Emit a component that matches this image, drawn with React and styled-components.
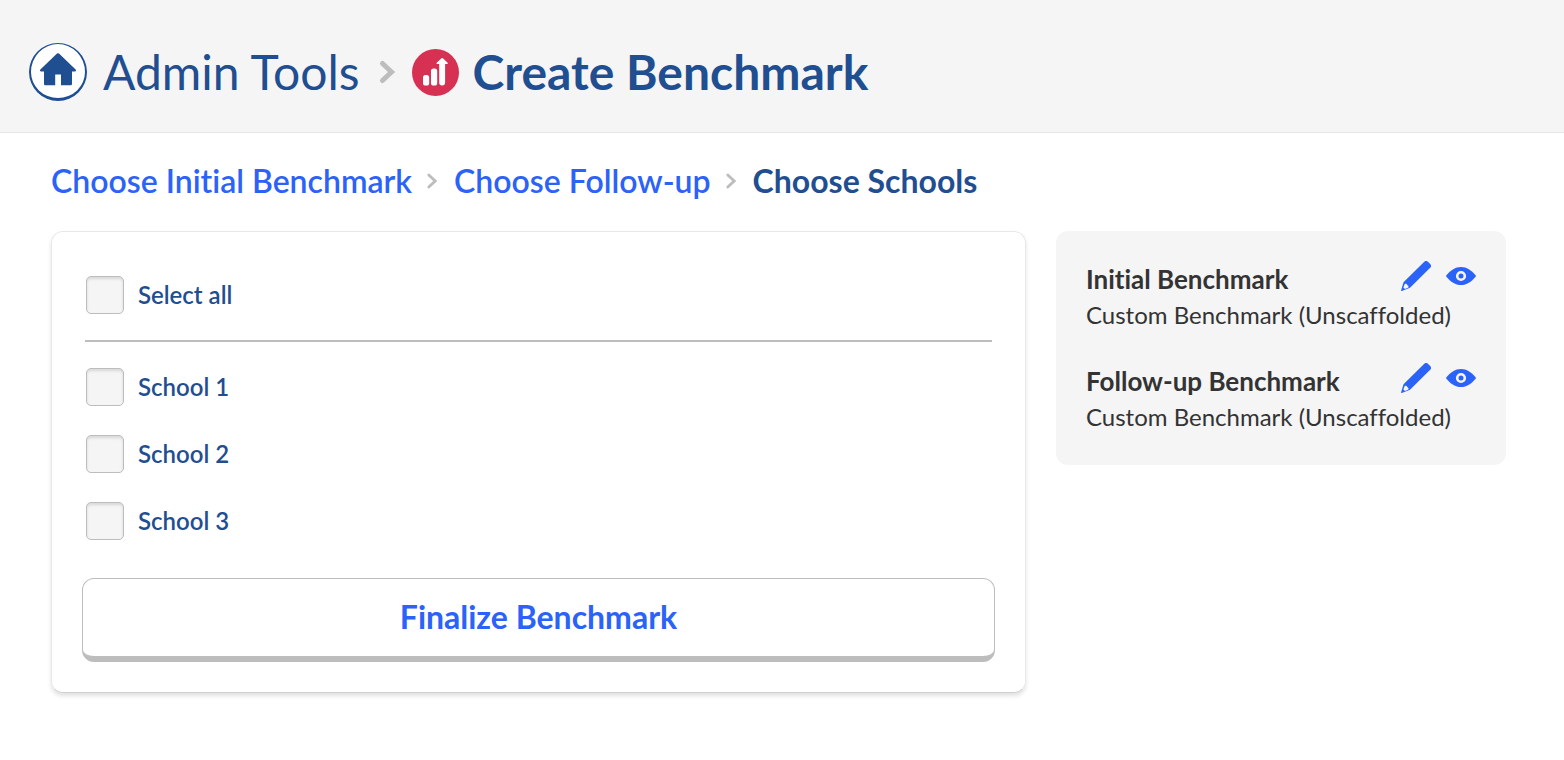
import { useState } from "react";
import styled, { createGlobalStyle } from "styled-components";

const schools = ["School 1", "School 2", "School 3"];

const benchmarks = [
  { title: "Initial Benchmark", name: "Custom Benchmark (Unscaffolded)" },
  { title: "Follow-up Benchmark", name: "Custom Benchmark (Unscaffolded)" },
];

const HomeIcon = () => (
  <svg width="36" height="33" viewBox="0 0 36 33" fill="currentColor">
    <path d="M17 .6a1.5 1.5 0 0 1 2 0L35.600 16.500c.8.800.4 2-.8 2H32v12.500a1.300 1.300 0 0 1-1.300 1.300H21V21.500H15.200V32.300H5.300A1.300 1.300 0 0 1 4 31V18.500H1.200c-1.200 0-1.600-1.200-.8-2z" />
  </svg>
);

const ChartIcon = () => (
  <svg width="47" height="47" viewBox="0 0 47 47">
    <circle cx="23.5" cy="23.5" r="23.5" fill="#d63152" />
    <g fill="#fff">
      <rect x="11" y="26" width="6.200" height="10.500" rx="2.600" />
      <rect x="19" y="19.500" width="6.200" height="17" rx="2.600" />
      <path d="M27.200 15h-2c-.8 0-1-.7-.5-1.200L29.500 9.300a1 1 0 0 1 1.400 0L35.600 13.800c.5.500.3 1.200-.5 1.200h-2v18.600a2.900 2.900 0 0 1-5.900 0z" />
    </g>
  </svg>
);

const Chevron = ({ large }) => (
  <ChevronIcon $large={large} viewBox="0 0 14 22" aria-hidden="true">
    <path d="M2.500 2.500 11.500 11l-9 8.500" />
  </ChevronIcon>
);

const PencilIcon = () => (
  <svg width="30" height="30" viewBox="0 0 30 30" fill="currentColor">
    <path
      fillRule="evenodd"
      d="M23.300.800a2.600 2.600 0 0 1 3.600 0l2.300 2.300a2.600 2.600 0 0 1 0 3.600L9.500 26.200a3 3 0 0 1-1.100.7L.8 29.900c-.5.200-.9-.2-.7-.7l2.200-7.300c.1-.5.400-.9.700-1.200zM3.600 23.200l-1.200 3.200 1.600 1.500 3.400-1.400c.3-1.100-.1-2-1.100-2.200-.2-1.300-1.400-1.900-2.700-1.100z"
    />
  </svg>
);

const EyeIcon = () => (
  <svg width="30" height="30" viewBox="0 0 30 30">
    <path
      fill="currentColor"
      d="M.4 14.200C4.700 9 9.400 5.900 15 5.900s10.300 3.100 14.600 8.300c.4.500.4 1 0 1.500-4.300 5.200-9 8.300-14.600 8.300S4.700 20.900.4 15.700c-.4-.5-.4-1 0-1.500z"
    />
    <circle cx="15" cy="15" r="3.800" fill="currentColor" stroke="#f5f5f5" strokeWidth="2.600" />
  </svg>
);

const App = () => {
  const [selected, setSelected] = useState([]);

  const toggleAll = () => {
    setSelected(selected.length === schools.length ? [] : schools);
  };

  const toggleSchool = (school) => {
    setSelected(
      selected.includes(school)
        ? selected.filter((each) => each !== school)
        : [...selected, school]
    );
  };

  return (
    <>
      <GlobalStyle />
      <Header>
        <HomeLink href="#home" aria-label="Home">
          <HomeIcon />
        </HomeLink>
        <HeaderLink href="#admin">Admin Tools</HeaderLink>
        <Chevron large />
        <ChartIcon />
        <PageTitle>Create Benchmark</PageTitle>
      </Header>

      <Main>
        <Steps>
          <StepLink href="#initial">Choose Initial Benchmark</StepLink>
          <Chevron />
          <StepLink href="#follow-up">Choose Follow-up</StepLink>
          <Chevron />
          <CurrentStep>Choose Schools</CurrentStep>
        </Steps>

        <Columns>
          <Card>
            <CheckRow>
              <Checkbox
                type="checkbox"
                checked={selected.length === schools.length}
                onChange={toggleAll}
              />
              Select all
            </CheckRow>
            <Divider />
            <SchoolList>
              {schools.map((school) => (
                <CheckRow key={school}>
                  <Checkbox
                    type="checkbox"
                    checked={selected.includes(school)}
                    onChange={() => toggleSchool(school)}
                  />
                  {school}
                </CheckRow>
              ))}
            </SchoolList>
            <FinalizeButton type="button">Finalize Benchmark</FinalizeButton>
          </Card>

          <Summary>
            {benchmarks.map((each) => (
              <SummaryItem key={each.title}>
                <SummaryHead>
                  <SummaryTitle>{each.title}</SummaryTitle>
                  <SummaryActions>
                    <IconButton type="button" aria-label={`Edit ${each.title}`}>
                      <PencilIcon />
                    </IconButton>
                    <IconButton type="button" aria-label={`View ${each.title}`}>
                      <EyeIcon />
                    </IconButton>
                  </SummaryActions>
                </SummaryHead>
                <SummaryText>{each.name}</SummaryText>
              </SummaryItem>
            ))}
          </Summary>
        </Columns>
      </Main>
    </>
  );
};

const GlobalStyle = createGlobalStyle`
  * {
    box-sizing: border-box;
  }
  body {
    margin: 0;
    background: #ffffff;
    font-family: Lato, "Open Sans", sans-serif;
    font-variant-ligatures: none;
  }
  svg {
    display: block;
    flex-shrink: 0;
  }
`;

const Header = styled.header`
  display: flex;
  align-items: center;
  padding: 36px 29px 24px;
  background: #f5f5f5;
  border-bottom: 1px solid #e8e8e8;
  color: #1f4e91;
  font-size: 48px;
  line-height: 72px;
`;

const HomeLink = styled.a`
  display: flex;
  justify-content: center;
  align-items: center;
  width: 58px;
  height: 58px;
  padding-bottom: 3px;
  margin-right: 16px;
  border: 1px solid #1f4e91;
  border-width: 1px 2px 3px;
  border-radius: 100%;
  background: #ffffff;
  color: #1f4e91;
`;

const HeaderLink = styled.a`
  color: inherit;
  text-decoration: none;
`;

const PageTitle = styled.h1`
  margin: 0 0 0 14px;
  font-size: 48px;
  font-weight: 700;
`;

const ChevronIcon = styled.svg`
  width: ${({ $large }) => ($large ? "14px" : "10px")};
  height: ${({ $large }) => ($large ? "22px" : "16px")};
  margin: ${({ $large }) => ($large ? "0 18px 0 20px" : "0 17px 0 15px")};
  overflow: visible;
  fill: none;
  stroke: #bdbdbd;
  stroke-width: ${({ $large }) => ($large ? 5 : 4)};
  stroke-linecap: round;
`;

const Main = styled.main`
  padding: 28px 58px 60px 51px;
`;

const Steps = styled.nav`
  display: flex;
  align-items: center;
  margin-bottom: 30px;
  font-size: 32px;
  font-weight: 600;
  line-height: 40px;
`;

const StepLink = styled.a`
  color: #2b62f8;
  text-decoration: none;
`;

const CurrentStep = styled.span`
  color: #1f4e91;
  font-weight: 700;
`;

const Columns = styled.div`
  display: grid;
  grid-template-columns: minmax(0, 1fr) 450px;
  align-items: start;
  gap: 30px;
`;

const Card = styled.section`
  padding: 43px 30px 30px;
  border: 1px solid #e8e8e8;
  border-bottom-color: #d0d0d0;
  border-radius: 12px;
  box-shadow: 0 3px 4px rgba(0, 0, 0, 0.12);
`;

const CheckRow = styled.label`
  display: flex;
  align-items: center;
  gap: 13px;
  margin: 0 3px;
  color: #1f4e91;
  font-size: 24px;
  font-weight: 600;
  line-height: 40px;
  cursor: pointer;
`;

const Checkbox = styled.input`
  appearance: none;
  width: 38px;
  height: 38px;
  margin: 1px;
  border: 1px solid #bdbdbd;
  border-radius: 5px;
  background: #f5f5f5;
  box-shadow: inset 0 2px 3px rgba(0, 0, 0, 0.12);
  cursor: pointer;
  &:checked {
    background: #2b62f8;
  }
`;

const Divider = styled.hr`
  height: 2px;
  margin: 25px 3px;
  border: none;
  background: #bdbdbd;
`;

const SchoolList = styled.div`
  display: flex;
  flex-direction: column;
  gap: 27px;
  margin-bottom: 37px;
`;

const FinalizeButton = styled.button`
  display: block;
  width: 100%;
  height: 84px;
  padding: 0 0 2px;
  border: 1px solid #bdbdbd;
  border-bottom-width: 6px;
  border-radius: 12px;
  background: #ffffff;
  color: #2b62f8;
  font-family: inherit;
  font-size: 32px;
  font-weight: 700;
  font-variant-ligatures: none;
  cursor: pointer;
`;

const Summary = styled.aside`
  display: flex;
  flex-direction: column;
  gap: 30px;
  padding: 30px;
  border-radius: 12px;
  background: #f5f5f5;
  color: #333333;
`;

const SummaryItem = styled.div`
  line-height: 36px;
`;

const SummaryHead = styled.div`
  display: flex;
  justify-content: space-between;
  align-items: flex-start;
`;

const SummaryTitle = styled.h2`
  margin: 0;
  font-size: 26px;
  font-weight: 700;
`;

const SummaryActions = styled.div`
  display: flex;
  gap: 15px;
`;

const IconButton = styled.button`
  padding: 0;
  border: none;
  background: none;
  color: #2b62f8;
  cursor: pointer;
`;

const SummaryText = styled.p`
  margin: 0;
  font-size: 24px;
`;

export default App;
